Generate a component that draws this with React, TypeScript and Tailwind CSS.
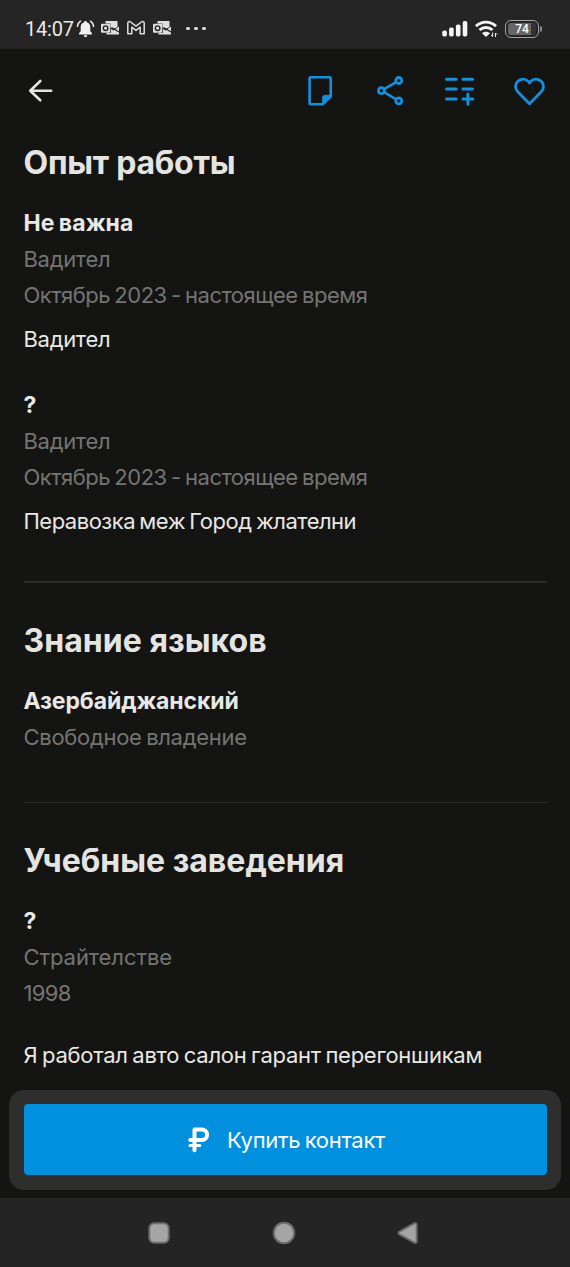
import type { ReactNode } from "react";
import clsx from "clsx";

type Line = {
  text: string;
  kind: "title" | "muted" | "body";
  className: string;
};

const experience: Line[][] = [
  [
    { text: "Не важна", kind: "title", className: "tracking-[0.1px]" },
    { text: "Вадител", kind: "muted", className: "tracking-[-0.3px]" },
    { text: "Октябрь 2023 - настоящее время", kind: "muted", className: "tracking-[-0.5px]" },
    { text: "Вадител", kind: "body", className: "mt-2 tracking-[-0.3px]" },
  ],
  [
    { text: "?", kind: "title", className: "" },
    { text: "Вадител", kind: "muted", className: "tracking-[-0.3px]" },
    { text: "Октябрь 2023 - настоящее время", kind: "muted", className: "tracking-[-0.5px]" },
    { text: "Перавозка меж Город жлателни", kind: "body", className: "mt-2 tracking-[-0.5px]" },
  ],
];

const languages: Line[] = [
  { text: "Азербайджанский", kind: "title", className: "tracking-[-0.12px]" },
  { text: "Свободное владение", kind: "muted", className: "tracking-[-0.3px]" },
];

const education: Line[] = [
  { text: "?", kind: "title", className: "" },
  { text: "Страйтелстве", kind: "muted", className: "tracking-[-0.08px]" },
  { text: "1998", kind: "muted", className: "tracking-[-0.7px]" },
];

const OutlookIcon = () => (
  <svg width="20" height="16" viewBox="0 0 20 16" fill="none">
    <path d="M5.500 1h12v6L13.500 9 10.500 7V3.500h-5z" fill="#dededc" />
    <path d="M19 6.500v8H6.500V13H11V9l2.500 1.500z" fill="#dededc" />
    <path d="M12 7.800l7 4.200" stroke="#252525" strokeWidth="1.200" />
    <rect x="1" y="3.800" width="9.300" height="9" rx="0.800" fill="#dededc" />
    <circle cx="5.600" cy="8.200" r="2.300" stroke="#252525" strokeWidth="1.400" />
  </svg>
);

const StatusBar = () => (
  <div className="flex h-[49px] shrink-0 items-center bg-[#252525] pt-[9px] pl-[25px] pr-7">
    <span className="w-[51px] font-[Roboto] text-[20px] leading-5 tracking-[-0.2px] text-[#e8e8e6]">14:07</span>
    <svg width="19" height="18" viewBox="0 0 19 18" fill="none">
      <path d="M9.500 1c.8 0 1.300.5 1.300 1.200 2.400.7 3.500 2.600 3.500 5v4l1.700 2v1.300H3v-1.300l1.700-2v-4c0-2.400 1.200-4.300 3.500-5C8.200 1.500 8.700 1 9.500 1zM7.800 15.300h3.400c0 1.200-.7 1.900-1.700 1.900s-1.700-.7-1.700-1.900z" fill="#f0f0ee" />
      <path d="M4.500 1.200C2.700 2.400 1.700 4 1.400 6.300M14.500 1.200c1.800 1.200 2.800 2.800 3.100 5.100" stroke="#f0f0ee" strokeWidth="1.500" strokeLinecap="round" />
    </svg>
    <div className="-mt-[2px] ml-[5px] flex items-center gap-[6px]">
      <OutlookIcon />
      <svg width="20" height="16" viewBox="0 0 20 16" fill="none">
        <path d="M1.800 3.200c0-1.600 1.700-2.100 2.800-1.200L10 6.200 15.400 2c1.100-.9 2.800-.4 2.800 1.200v10.600h-4V7.200L10 10.400 5.800 7.200v6.600h-4z" stroke="#dededc" strokeWidth="1.500" strokeLinejoin="round" />
      </svg>
      <OutlookIcon />
    </div>
    <div className="-mt-px ml-[14px] flex gap-[4.500px]">
      <span className="size-[3.500px] rounded-full bg-[#e0e0de]" />
      <span className="size-[3.500px] rounded-full bg-[#e0e0de]" />
      <span className="size-[3.500px] rounded-full bg-[#e0e0de]" />
    </div>
    <div className="ml-auto flex items-center gap-[6px]">
      <svg className="-mt-px -ml-px mr-px" width="27" height="18" viewBox="0 0 27 18" fill="#f5f5f5">
        <rect x="0.300" y="10.500" width="4.600" height="6" rx="1.800" />
        <rect x="7.100" y="7.500" width="4.600" height="9" rx="1.800" />
        <rect x="13.900" y="4.500" width="4.600" height="12" rx="1.800" />
        <rect x="20.700" y="1" width="4.600" height="15.500" rx="1.800" />
      </svg>
      <svg className="-ml-[2px] mr-[2px]" width="24" height="18" viewBox="0 0 24 18" fill="none">
        <path d="M2 6.200C7.500.7 16.500.7 22 6.200M5.500 10c3.700-3.400 9.300-3.400 13 0" stroke="#f5f5f5" strokeWidth="2.900" />
        <path d="M8 13.300c2.200-2 5.800-2 8 0l-4 3.600z" fill="#f5f5f5" />
        <path d="M18.700 12.500v4M18.700 16.500l-1.700-1.600M21.500 17v-4M21.500 13l1.500 1.500" stroke="#f5f5f5" />
      </svg>
      <div className="-ml-px flex items-center">
        <div className="h-[18px] w-[34px] rounded-[6px] border-[1.500px] border-[#a2a2a2] p-[2px]">
          <div className="flex h-full items-center justify-center rounded-[3px] bg-gradient-to-r from-[#666] from-82% to-[#333] to-82% font-[Roboto] text-[12px] font-medium leading-3 text-white">
            74
          </div>
        </div>
        <span className="ml-px h-[6px] w-[2px] rounded-r bg-[#8a8a8a]" />
      </div>
    </div>
  </div>
);

const Toolbar = () => (
  <div className="flex h-[83px] shrink-0 items-center justify-between bg-[#141412] pl-[27px] pr-[23px]">
    <button>
      <svg width="27" height="26" viewBox="0 0 27 26" fill="none" stroke="#e4e4e2" strokeWidth="2.600" strokeLinecap="round" strokeLinejoin="round">
        <path d="M13.300 3L3.200 12.700l10.100 9.600M3.200 12.700h21" />
      </svg>
    </button>
    <div className="flex items-center gap-[34px]">
      <button>
        <svg width="36" height="36" viewBox="0 0 36 36" fill="none">
          <path d="M9.600 4.200h19.100a1 1 0 0 1 1 1V23.500L22 31.200H9.600a1 1 0 0 1-1-1v-25a1 1 0 0 1 1-1z" stroke="#1590da" strokeWidth="2.600" strokeLinejoin="round" />
          <path d="M29.500 22.300h-5.800a2 2 0 0 0-2 2v6.700h.8l7-7z" fill="#1590da" stroke="#1590da" strokeLinejoin="round" />
        </svg>
      </button>
      <button>
        <svg width="36" height="36" viewBox="0 0 36 36" fill="none" stroke="#1590da" strokeWidth="2.800">
          <circle cx="10.400" cy="17.700" r="3" />
          <circle cx="27.800" cy="7.500" r="3" />
          <circle cx="27.800" cy="27.900" r="3" />
          <path d="M13 16.200l12.200-7.100M13 19.200l12.200 7.100" strokeWidth="2.500" />
        </svg>
      </button>
      <button>
        <svg width="36" height="36" viewBox="0 0 36 36" fill="none" stroke="#1590da" strokeWidth="3" strokeLinecap="round">
          <path d="M5.500 6.300h9.700M22 6.300h9.500M5.500 16h9.700M22 16h9.500M5.500 26h9.700M22 26h9.800M26.900 21v10.300" />
        </svg>
      </button>
      <button>
        <svg width="36" height="36" viewBox="0 0 36 36" fill="none" stroke="#1590da" strokeWidth="2.800" strokeLinejoin="round">
          <path d="M18.500 30.700L7 19c-3.300-3.300-3.200-7.900 0-10.900 3.300-2.900 8-2.700 10.600.6l.9 1.300.9-1.300c2.600-3.300 7.300-3.500 10.600-.6 3.200 3 3.300 7.600 0 10.900z" />
        </svg>
      </button>
    </div>
  </div>
);

const TextLine = ({ line }: { line: Line }) => (
  <p
    className={clsx(
      "h-[36px] whitespace-nowrap leading-[36px] [word-spacing:-1.3px]",
      line.kind === "title" && "text-[23px] font-bold text-[#e8e8e6]",
      line.kind === "muted" && "text-[22px] text-[#747472]",
      line.kind === "body" && "text-[22px] text-[#e8e8e6]",
      line.className,
    )}
  >
    {line.text}
  </p>
);

const Heading = ({ children, className }: { children: ReactNode; className?: string }) => (
  <h2 className={clsx("mb-[22px] whitespace-nowrap text-[32px] font-bold leading-[40px] text-[#e4e4e2]", className)}>
    {children}
  </h2>
);

const ContactPanel = () => (
  <div className="mx-[9px] mt-[14px] rounded-[15px] bg-[#2e2e2e] px-[14.500px] pt-[14px] pb-[15px]">
    <button className="flex h-[71px] w-full items-center rounded-[4px] bg-[#0090de] pl-[163px] text-white">
      <svg width="24" height="28" viewBox="0 0 24 28" fill="none" stroke="#fff" strokeLinecap="round" strokeLinejoin="round">
        <path d="M7.500 24.300V3.500h7.300a5.200 5.200 0 0 1 0 10.500H3.200" strokeWidth="4" />
        <path d="M3 19.600h9.800" strokeWidth="3" />
      </svg>
      <span className="mt-[2px] ml-[16.500px] whitespace-nowrap text-[22px] tracking-[-0.32px] [word-spacing:-1.3px]">
        Купить контакт
      </span>
    </button>
  </div>
);

const NavigationBar = () => (
  <div className="mt-2 flex h-[69px] shrink-0 items-center justify-center gap-[100.500px] bg-[#242424] pr-[3px]">
    <svg width="24" height="24" viewBox="0 0 24 24">
      <rect x="2.300" y="2.300" width="19.400" height="19.400" rx="5" fill="#a5a5a5" stroke="#6b6b6b" strokeWidth="2" />
    </svg>
    <svg width="24" height="24" viewBox="0 0 24 24">
      <circle cx="12" cy="12" r="10.200" fill="#a5a5a5" stroke="#6b6b6b" strokeWidth="2" />
    </svg>
    <svg width="24" height="24" viewBox="0 0 24 24">
      <path d="M3.500 10.600L18.300 2.400c1.300-.7 2.400 0 2.400 1.400v16.400c0 1.400-1.100 2.100-2.400 1.400L3.500 13.400c-1.300-.8-1.300-2 0-2.800z" fill="#a5a5a5" stroke="#6b6b6b" strokeWidth="2" />
    </svg>
  </div>
);

export default function App() {
  return (
    <div className="flex h-[1267px] w-[570px] flex-col overflow-hidden bg-[#141412] font-[Inter,'Noto_Sans',sans-serif]">
      <StatusBar />
      <Toolbar />
      <main className="h-[944px] shrink-0 px-[23.500px] pt-[11px]">
        <section className="h-[440px] border-b-2 border-[#2b2b2a]">
          <Heading className="tracking-[-0.25px]">Опыт работы</Heading>
          <div className="flex flex-col gap-[29.500px]">
            {experience.map((job, i) => (
              <div key={i}>
                {job.map((line, j) => (
                  <TextLine key={j} line={line} />
                ))}
              </div>
            ))}
          </div>
        </section>
        <section className="h-[220px] border-b border-[#2b2b2a] pt-[38px]">
          <Heading className="tracking-[0.05px]">Знание языков</Heading>
          {languages.map((line) => (
            <TextLine key={line.text} line={line} />
          ))}
        </section>
        <section className="pt-[38px]">
          <Heading className="tracking-[0px]">Учебные заведения</Heading>
          {education.map((line) => (
            <TextLine key={line.text} line={line} />
          ))}
          <p className="mt-[26px] whitespace-nowrap text-[22px] leading-[36px] tracking-[-0.26px] text-[#e8e8e6] [word-spacing:-1.3px]">
            Я работал авто салон гарант перегоншикам
          </p>
        </section>
      </main>
      <ContactPanel />
      <NavigationBar />
    </div>
  );
}
